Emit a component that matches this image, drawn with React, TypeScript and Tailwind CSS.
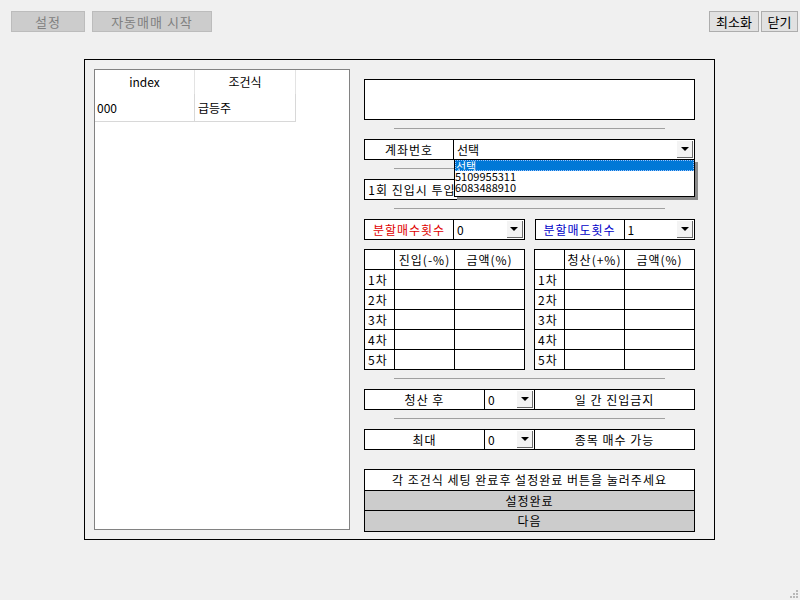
import React from "react";

const font = { fontFamily: '"Noto Sans CJK KR", "Noto Sans", sans-serif' };

function Sep({ className = "" }: { className?: string }) {
  return <div className={`mx-[30px] h-px bg-[#a0a0a0] ${className}`} />;
}

function Select({ value, className = "" }: { value: string; className?: string }) {
  return (
    <div className={`relative flex h-full items-center bg-white pl-[3px] tracking-normal ${className}`}>
      <span>{value}</span>
      <div className="absolute right-px top-px flex h-[17px] w-[16px] items-center justify-center border-b border-r border-[#6b6b6b] bg-[#f4f4f4]">
        <div className="h-0 w-0 border-x-[4px] border-t-[4px] border-x-transparent border-t-black" />
      </div>
    </div>
  );
}

function SplitTable({ head }: { head: string }) {
  const rows = ["1차", "2차", "3차", "4차", "5차"];
  return (
    <div className="grid w-[161px] grid-cols-[30px_60px_70px] border-l border-t border-black bg-white">
      <div className="h-[20px] border-b border-r border-black" />
      <div className="flex h-[20px] items-center justify-center border-b border-r border-black">{head}</div>
      <div className="flex h-[20px] items-center justify-center border-b border-r border-black">금액(%)</div>
      {rows.map((r) => (
        <React.Fragment key={r}>
          <div className="flex h-[20px] items-center pl-[3px] border-b border-r border-black">{r}</div>
          <div className="h-[20px] border-b border-r border-black" />
          <div className="h-[20px] border-b border-r border-black" />
        </React.Fragment>
      ))}
    </div>
  );
}

export default function App() {
  return (
    <div
      className="relative h-[600px] w-[800px] overflow-hidden bg-[#f0f0f0] text-[12px] tracking-[1px] text-black"
      style={font}
    >
      {/* top bar */}
      <div className="flex justify-between pl-[11px] pr-[2px] pt-[11px]">
        <div className="flex gap-[7px]">
          <div className="flex h-[21px] w-[74px] items-center justify-center border border-[#bcbcbc] bg-[#cccccc] text-[13px] text-[#808080]">
            설정
          </div>
          <div className="flex h-[21px] w-[120px] items-center justify-center border border-[#bcbcbc] bg-[#cccccc] text-[13px] text-[#808080]">
            자동매매 시작
          </div>
        </div>
        <div className="flex gap-[2px]">
          <div className="flex h-[21px] w-[50px] items-center justify-center border border-[#adadad] bg-[#e1e1e1] text-[13px] tracking-normal">
            최소화
          </div>
          <div className="flex h-[21px] w-[37px] items-center justify-center border border-[#adadad] bg-[#e1e1e1] text-[13px] tracking-normal">
            닫기
          </div>
        </div>
      </div>

      {/* main panel */}
      <div className="ml-[84px] mt-[27px] flex h-[481px] w-[631px] border border-black pl-[9px] pt-[9px]">
        {/* list */}
        <div className="h-[461px] w-[256px] border border-[#828282] bg-white tracking-normal">
          <div className="flex h-[24px]">
            <div className="flex w-[100px] items-center justify-center border-r border-[#e3e3e3]">index</div>
            <div className="flex w-[101px] items-center justify-center border-r border-[#e3e3e3]">조건식</div>
          </div>
          <div className="flex h-[28px] w-[201px] border-b border-[#d8d8d8]">
            <div className="flex w-[100px] items-center border-r border-[#d8d8d8] pl-[2px]">000</div>
            <div className="flex w-[101px] items-center border-r border-[#d8d8d8] pl-[3px]">급등주</div>
          </div>
        </div>

        {/* right column */}
        <div className="relative ml-[14px] mt-[10px] flex w-[331px] flex-col">
          <div className="h-[41px] border border-black bg-white" />
          <Sep className="mt-[8px]" />

          <div className="mt-[10px] flex h-[21px] border border-black bg-white">
            <div className="flex w-[89px] items-center justify-center border-r border-black">계좌번호</div>
            <Select value="선택" className="flex-1" />
          </div>
          <Sep className="mt-[8px]" />

          <div className="mt-[10px] flex h-[21px] border border-black bg-white">
            <div className="flex w-[119px] items-center justify-center overflow-hidden whitespace-nowrap border-r border-black">
              1회 진입시 투입금액
            </div>
            <Select value="0" className="w-[90px] border-r border-black" />
            <div className="flex flex-1 items-center justify-center">원</div>
          </div>
          <Sep className="mt-[8px]" />

          <div className="mt-[10px] flex h-[21px] gap-[10px]">
            <div className="flex w-[161px] border border-black bg-white">
              <div className="flex w-[89px] items-center justify-center border-r border-black text-[#e00000]">분할매수횟수</div>
              <Select value="0" className="flex-1" />
            </div>
            <div className="flex w-[161px] border border-black bg-white">
              <div className="flex w-[89px] items-center justify-center border-r border-black text-[#0000c8]">분할매도횟수</div>
              <Select value="1" className="flex-1" />
            </div>
          </div>

          <div className="mt-[9px] flex gap-[9px]">
            <SplitTable head="진입(-%)" />
            <SplitTable head="청산(+%)" />
          </div>
          <Sep className="mt-[8px]" />

          <div className="mt-[10px] flex h-[21px] border border-black bg-white">
            <div className="flex w-[120px] items-center justify-center border-r border-black">청산 후</div>
            <Select value="0" className="w-[50px] border-r border-black" />
            <div className="flex flex-1 items-center justify-center">일 간 진입금지</div>
          </div>
          <Sep className="mt-[8px]" />

          <div className="mt-[10px] flex h-[21px] border border-black bg-white">
            <div className="flex w-[120px] items-center justify-center border-r border-black">최대</div>
            <Select value="0" className="w-[50px] border-r border-black" />
            <div className="flex flex-1 items-center justify-center">종목 매수 가능</div>
          </div>

          <div className="mt-[19px] flex flex-col border border-black">
            <div className="flex h-[20px] items-center justify-center bg-white">
              각 조건식 세팅 완료후 설정완료 버튼을 눌러주세요
            </div>
            <div className="flex h-[20px] items-center justify-center border-t border-black bg-[#cccccc]">설정완료</div>
            <div className="flex h-[21px] items-center justify-center border-t border-black bg-[#cccccc]">다음</div>
          </div>

          {/* open dropdown list */}
          <div className="absolute left-[90px] top-[80px] w-[241px] border border-black bg-white text-[11px] leading-[11px] tracking-normal shadow-[3px_3px_0_#8a8a8a]">
            <div className="h-[11px] border border-dotted border-[#9cc3ff] bg-[#0078d7] text-white">선택</div>
            <div className="h-[11px]">5109955311</div>
            <div className="h-[11px]">6083488910</div>
            <div className="h-[3px]" />
          </div>
        </div>
      </div>

      {/* resize grip */}
      <div className="absolute bottom-[2px] right-[2px] grid grid-cols-3 gap-px">
        <div className="h-[2px] w-[2px]" />
        <div className="h-[2px] w-[2px]" />
        <div className="h-[2px] w-[2px] bg-[#b8b8b8]" />
        <div className="h-[2px] w-[2px]" />
        <div className="h-[2px] w-[2px] bg-[#b8b8b8]" />
        <div className="h-[2px] w-[2px] bg-[#b8b8b8]" />
        <div className="h-[2px] w-[2px] bg-[#b8b8b8]" />
        <div className="h-[2px] w-[2px] bg-[#b8b8b8]" />
        <div className="h-[2px] w-[2px] bg-[#b8b8b8]" />
      </div>
    </div>
  );
}
